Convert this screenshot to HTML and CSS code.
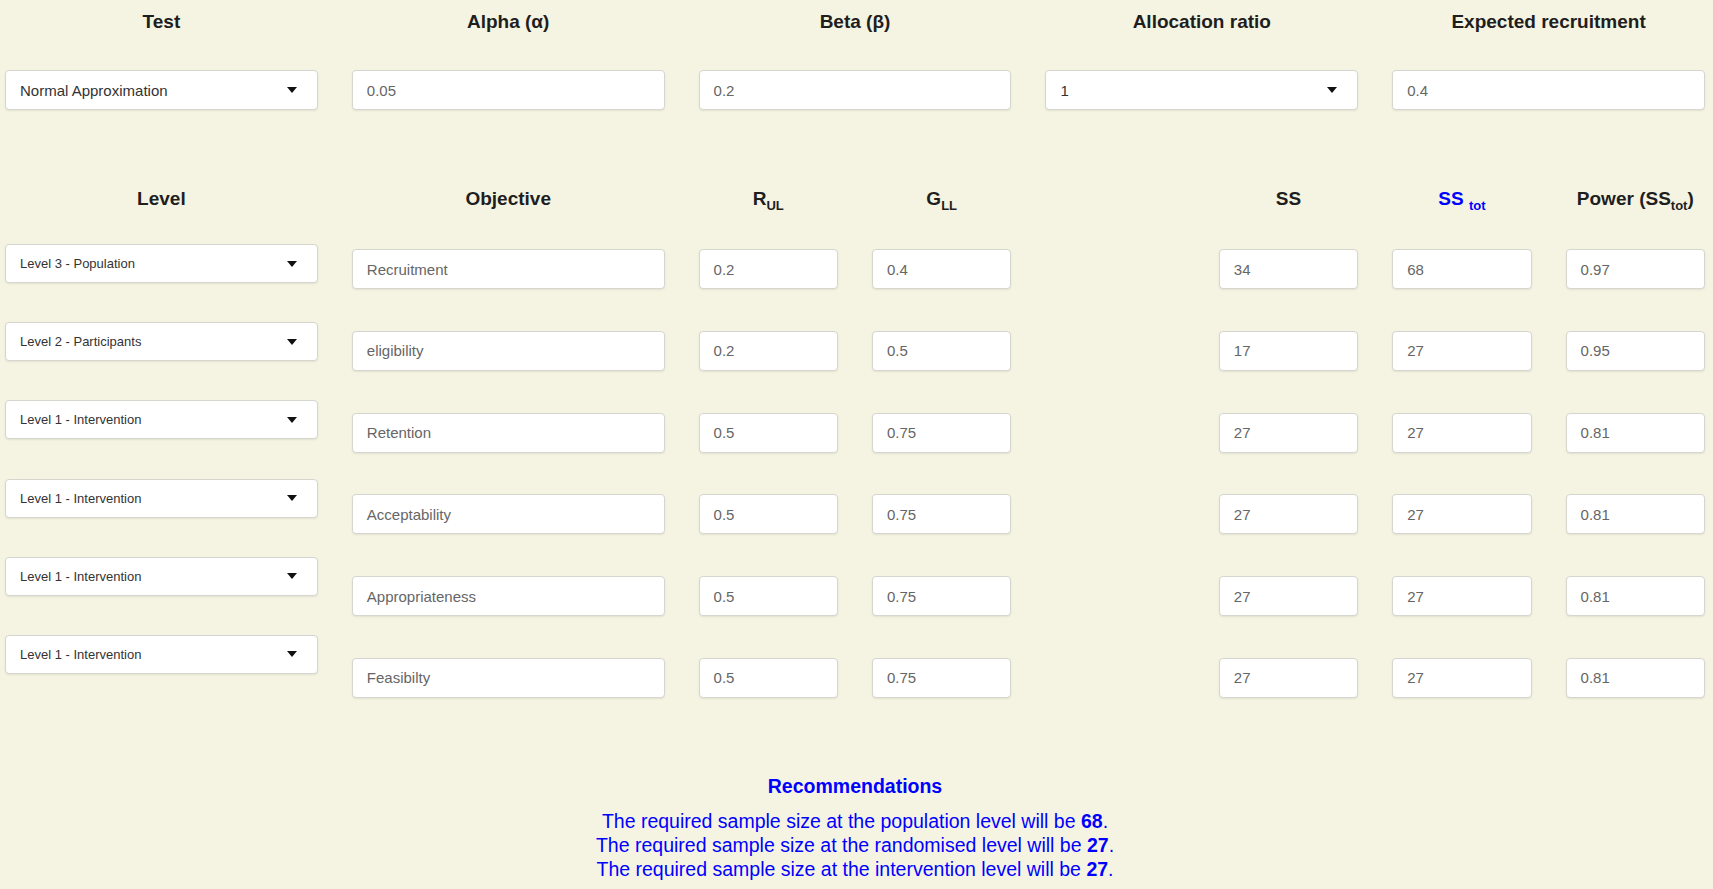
FILE: index.html
```html
<!DOCTYPE html>
<html lang="en">
<head>
<meta charset="utf-8">
<title>Sample size</title>
<link rel="stylesheet" href="styles.css">
</head>
<body>
<main class="page">
  <section class="top">
    <div class="field">
      <div class="label">Test</div>
      <div class="select big"><span>Normal Approximation</span><span class="caret"></span></div>
    </div>
    <div class="field">
      <div class="label">Alpha (α)</div>
      <div class="input">0.05</div>
    </div>
    <div class="field">
      <div class="label">Beta (β)</div>
      <div class="input">0.2</div>
    </div>
    <div class="field">
      <div class="label">Allocation ratio</div>
      <div class="select big"><span>1</span><span class="caret"></span></div>
    </div>
    <div class="field">
      <div class="label">Expected recruitment</div>
      <div class="input">0.4</div>
    </div>
  </section>

  <section class="levels">
    <div class="col wide">
      <div class="head">Level</div>
      <div class="stack selects">
        <div class="select"><span>Level 3 - Population</span><span class="caret"></span></div>
        <div class="select"><span>Level 2 - Participants</span><span class="caret"></span></div>
        <div class="select"><span>Level 1 - Intervention</span><span class="caret"></span></div>
        <div class="select"><span>Level 1 - Intervention</span><span class="caret"></span></div>
        <div class="select"><span>Level 1 - Intervention</span><span class="caret"></span></div>
        <div class="select"><span>Level 1 - Intervention</span><span class="caret"></span></div>
      </div>
    </div>
    <div class="col wide">
      <div class="head">Objective</div>
      <div class="stack">
        <div class="input">Recruitment</div>
        <div class="input">eligibility</div>
        <div class="input">Retention</div>
        <div class="input">Acceptability</div>
        <div class="input">Appropriateness</div>
        <div class="input">Feasibilty</div>
      </div>
    </div>
    <div class="col">
      <div class="head">R<sub>UL</sub></div>
      <div class="stack">
        <div class="input">0.2</div>
        <div class="input">0.2</div>
        <div class="input">0.5</div>
        <div class="input">0.5</div>
        <div class="input">0.5</div>
        <div class="input">0.5</div>
      </div>
    </div>
    <div class="col">
      <div class="head">G<sub>LL</sub></div>
      <div class="stack">
        <div class="input">0.4</div>
        <div class="input">0.5</div>
        <div class="input">0.75</div>
        <div class="input">0.75</div>
        <div class="input">0.75</div>
        <div class="input">0.75</div>
      </div>
    </div>
    <div class="col"></div>
    <div class="col">
      <div class="head">SS</div>
      <div class="stack">
        <div class="input">34</div>
        <div class="input">17</div>
        <div class="input">27</div>
        <div class="input">27</div>
        <div class="input">27</div>
        <div class="input">27</div>
      </div>
    </div>
    <div class="col">
      <div class="head blue">SS <sub>tot</sub></div>
      <div class="stack">
        <div class="input">68</div>
        <div class="input">27</div>
        <div class="input">27</div>
        <div class="input">27</div>
        <div class="input">27</div>
        <div class="input">27</div>
      </div>
    </div>
    <div class="col">
      <div class="head">Power (SS<sub>tot</sub>)</div>
      <div class="stack">
        <div class="input">0.97</div>
        <div class="input">0.95</div>
        <div class="input">0.81</div>
        <div class="input">0.81</div>
        <div class="input">0.81</div>
        <div class="input">0.81</div>
      </div>
    </div>
  </section>

  <section class="recs">
    <h2 class="recs-title">Recommendations</h2>
    <p class="rec">The required sample size at the population level will be <b>68</b>.</p>
    <p class="rec">The required sample size at the randomised level will be <b>27</b>.</p>
    <p class="rec">The required sample size at the intervention level will be <b>27</b>.</p>
  </section>
</main>
</body>
</html>
```

FILE: styles.css
```css
* { box-sizing: border-box; }

html, body {
  margin: 0;
  padding: 0;
  background: #f5f4e2;
}

body {
  font-family: "Liberation Sans", Arial, sans-serif;
  color: #222;
  height: 889px;
  overflow: hidden;
}

.page {
  padding: 9px 8px 0 5px;
}

.top,
.levels {
  display: grid;
  grid-template-columns: repeat(10, 1fr);
  column-gap: 34px;
}

.field {
  grid-column: span 2;
  display: flex;
  flex-direction: column;
}

.label,
.head {
  text-align: center;
  font-weight: bold;
  font-size: 19px;
  line-height: 26px;
  height: 26px;
  color: #1e1e1e;
}

.field .label { margin-bottom: 35px; }

.head {
  height: 28px;
  line-height: 28px;
}

.head sub {
  font-size: 13px;
  line-height: 0;
  vertical-align: -5px;
}

.blue { color: #0000ff; }

.input,
.select {
  background: #fff;
  border: 1px solid #d6d6d0;
  border-radius: 4px;
  box-shadow: 0 1px 2px rgba(0, 0, 0, 0.08);
  height: 40px;
  display: flex;
  align-items: center;
  padding: 0 14px;
  font-size: 15px;
  color: #666;
  white-space: nowrap;
}

.select {
  justify-content: space-between;
  color: #333;
  font-size: 13px;
  height: 39px;
  padding-right: 20px;
}

.select.big {
  font-size: 15px;
  height: 40px;
}

.caret {
  width: 0;
  height: 0;
  border-left: 5px solid transparent;
  border-right: 5px solid transparent;
  border-top: 6px solid #111;
}

.levels {
  margin-top: 75px;
  align-items: start;
}

.col {
  display: flex;
  flex-direction: column;
}

.col.wide { grid-column: span 2; }

.stack {
  display: flex;
  flex-direction: column;
  gap: 41.8px;
  padding-top: 36px;
}

.stack.selects {
  gap: 39.2px;
  padding-top: 31px;
}

.recs {
  text-align: center;
  color: #0000ff;
  margin-top: 75px;
}

.recs-title {
  margin: 0 0 10px;
  font-size: 19.5px;
  line-height: 26px;
  font-weight: bold;
}

.rec {
  margin: 0;
  font-size: 19.5px;
  line-height: 24px;
}
```
